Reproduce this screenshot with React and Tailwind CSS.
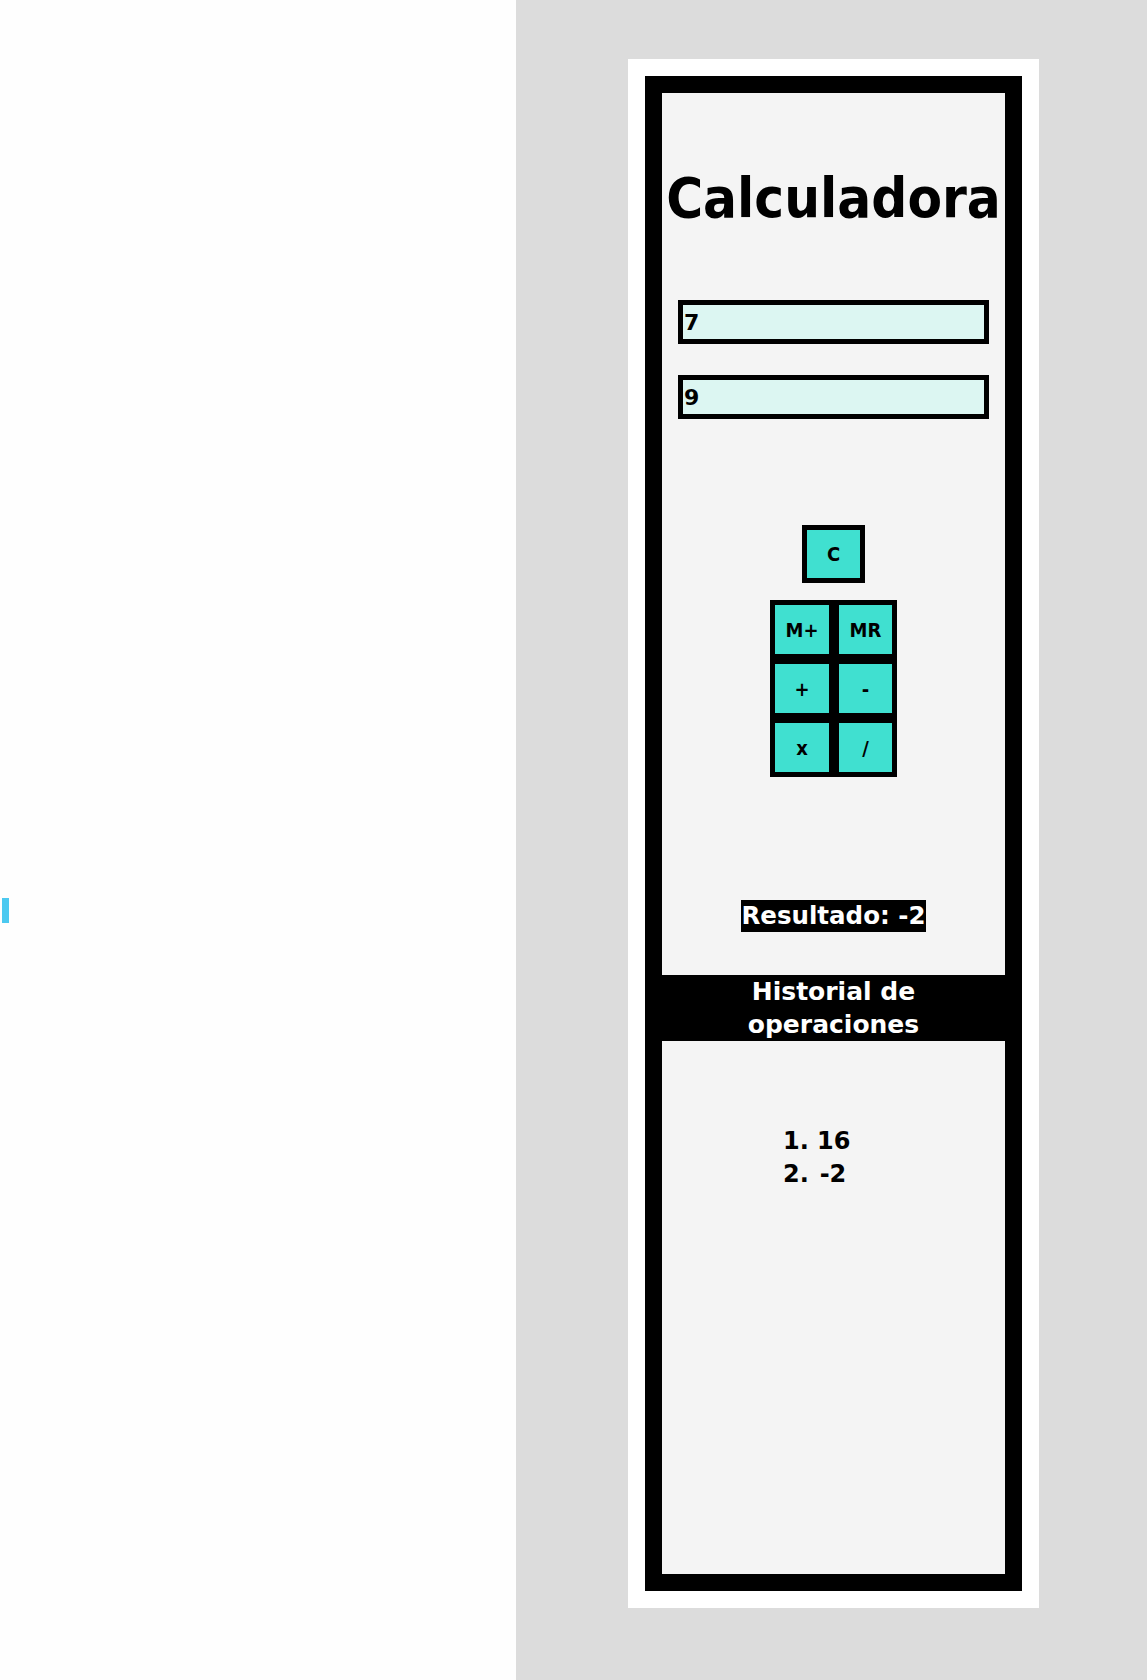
import { useState } from 'react';

const font = { fontFamily: '"DejaVu Sans", "Liberation Sans", sans-serif' };
const condensed = { fontFamily: '"DejaVu Sans Condensed", "DejaVu Sans", sans-serif' };

// operaciones de la calculadora
const ops = [
  ['M+', 'mplus'],
  ['MR', 'mr'],
  ['+', 'sum'],
  ['-', 'sub'],
  ['x', 'mul'],
  ['/', 'div'],
];

const CalcButton = ({ label, onClick, className = '' }) => (
  <button
    type="button"
    onClick={onClick}
    style={condensed}
    className={`flex items-center justify-center border-[5px] border-black bg-[#40e0d0] text-[20px] font-bold text-black ${className}`}
  >
    {label}
  </button>
);

const App = () => {
  const [a, setA] = useState('7');
  const [b, setB] = useState('9');
  const [result, setResult] = useState(-2);
  const [memory, setMemory] = useState(null);
  const [history, setHistory] = useState([16, -2]);

  const run = (op) => {
    const x = parseFloat(a);
    const y = parseFloat(b);
    let r = null;
    if (op === 'sum') r = x + y;
    if (op === 'sub') r = x - y;
    if (op === 'mul') r = x * y;
    if (op === 'div') r = y !== 0 ? x / y : 'Error';
    if (op === 'mplus') { setMemory(result); return; }
    if (op === 'mr') { if (memory !== null) setA(String(memory)); return; }
    setResult(r);
    setHistory((prev) => [...prev, r]);
  };

  const clear = () => {
    setA('');
    setB('');
    setResult(0);
  };

  return (
    <div className="flex min-h-[1680px] w-full" style={font}>
      {/* columna izquierda vacía */}
      <div className="w-[516px] shrink-0 bg-[#fefefe] pt-[898px] pl-[2px]">
        <div className="h-[25px] w-[7px] bg-[#4cc9f0]" />
      </div>

      <div className="flex-1 bg-[#dcdcdc] pt-[59px] pl-[112px]">
        <div className="w-[411px] bg-white p-[17px]">
          <div className="flex h-[1515px] flex-col items-center border-[17px] border-black bg-[#f4f4f4]">
            <h1 className="mt-[75px] whitespace-nowrap text-[56px] font-bold leading-[60px] text-black" style={condensed}>
              Calculadora
            </h1>

            <input
              value={a}
              onChange={(e) => setA(e.target.value)}
              className="mt-[72px] h-[44px] w-[311px] border-[5px] border-black bg-[#dcf6f2] px-[1px] text-[22px] font-bold text-black outline-none"
              style={font}
            />
            <input
              value={b}
              onChange={(e) => setB(e.target.value)}
              className="mt-[31px] h-[44px] w-[311px] border-[5px] border-black bg-[#dcf6f2] px-[1px] text-[22px] font-bold text-black outline-none"
              style={font}
            />

            <CalcButton label="C" onClick={clear} className="mt-[106px] h-[58px] w-[63px]" />

            <div className="mt-[17px] grid grid-cols-[64px_63px]">
              {ops.map(([label, op]) => (
                <CalcButton key={op} label={label} onClick={() => run(op)} className="h-[59px] w-full" />
              ))}
            </div>

            <span className="mt-[123px] bg-black text-[24.5px] font-bold leading-[32px] text-white">
              Resultado: {result}
            </span>

            <div className="mt-[43px] flex h-[66px] w-full items-center justify-center bg-black px-[60px] text-center text-[25px] font-bold leading-[33px] text-white">
              Historial de operaciones
            </div>

            <div className="mt-[84px] w-full text-[24px] font-bold leading-[33px] text-black">
              {history.map((h, i) => (
                <div key={i} className="flex pl-[121px]">
                  <span className="w-[34px]">{i + 1}.</span>
                  <span className="w-[32px] whitespace-nowrap text-center">{h}</span>
                </div>
              ))}
            </div>
          </div>
        </div>
      </div>
    </div>
  );
};

export default App;
